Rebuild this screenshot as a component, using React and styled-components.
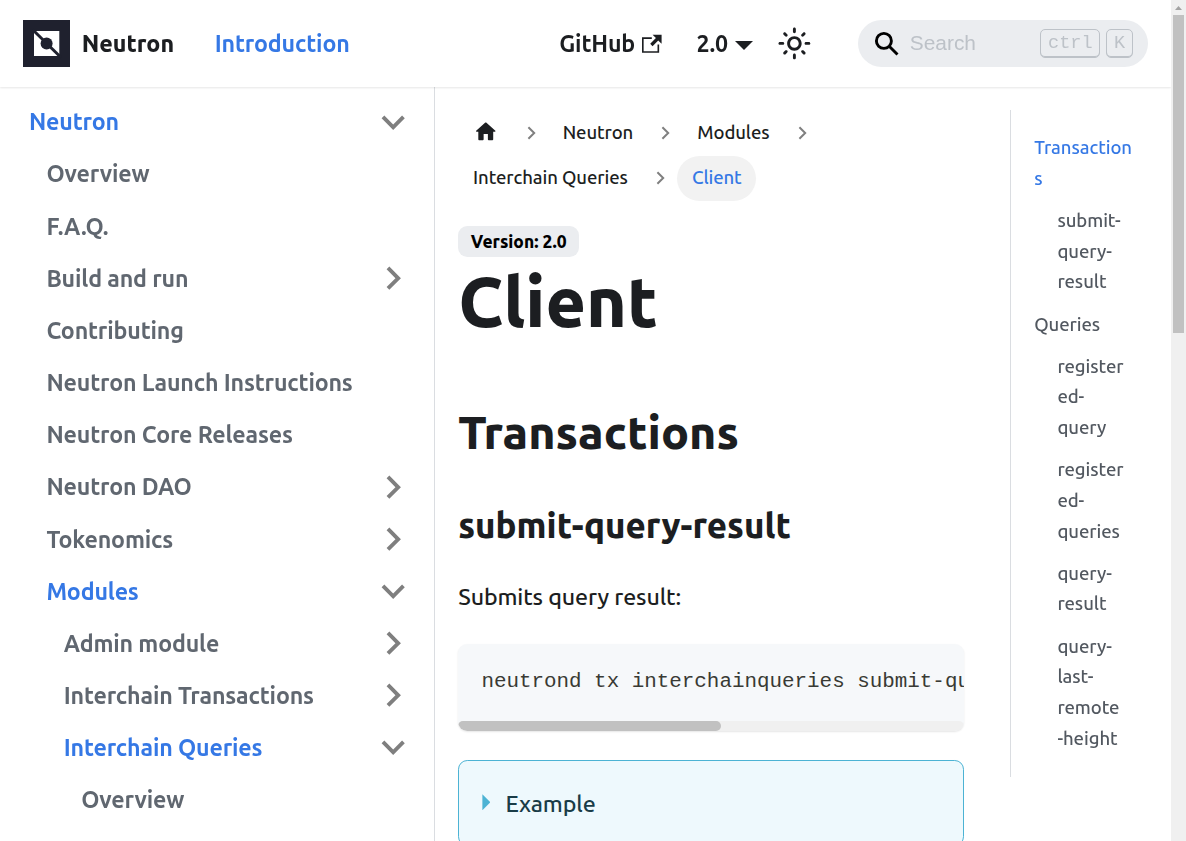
import React from "react";
import styled, { createGlobalStyle } from "styled-components";

const GlobalStyle = createGlobalStyle`
  *, *::before, *::after { box-sizing: border-box; }
  html { font-size: 23.2px; }
  body {
    margin: 0;
    overflow: hidden;
    background: #fff;
    color: #1c1e21;
    font-family: Ubuntu, "Noto Sans", sans-serif;
    font-weight: 500;
    line-height: 1.65;
    text-rendering: optimizeLegibility;
  }
  a { color: inherit; text-decoration: none; }
`;

const Window = styled.div`
  display: grid;
  grid-template-columns: 1fr 15px;
  height: 841px;
  overflow: hidden;
`;

const Page = styled.div`
  display: flex;
  flex-direction: column;
  min-width: 0;
  height: 841px;
  overflow: hidden;
`;

/* Navbar */

const Navbar = styled.nav`
  display: flex;
  flex: none;
  align-items: center;
  height: 3.75rem;
  padding: 0.5rem 1rem;
  background: #fff;
  box-shadow: 0 1px 2px 0 rgba(0, 0, 0, 0.1);
  font-weight: 600;
  letter-spacing: -0.14px;
  z-index: 1;
  will-change: transform;
`;

const Brand = styled.a`
  display: flex;
  align-items: center;
  gap: 0.5rem;
  margin-right: 1rem;
  font-weight: 800;
  letter-spacing: 0;
`;

const Logo = styled.svg`
  display: block;
  width: 47px;
  height: 47px;
`;

const NavLink = styled.a`
  display: flex;
  align-items: center;
  padding: 0.25rem 0.75rem;
  color: ${(p) => (p.$active ? "#3578e5" : "#1c1e21")};
`;

const NavText = styled.span`
  margin-top: -1px;
`;

const Spacer = styled.div`
  flex: 1;
`;

const ExternalIcon = styled.svg`
  width: 19.6px;
  height: 19.6px;
  margin-left: 0.3rem;
`;

const Caret = styled.span`
  margin-left: 0.3em;
  border: solid transparent;
  border-width: 0.4em 0.4em 0;
  border-top-color: currentColor;
  transform: translateY(2px);
`;

const ThemeToggle = styled.button`
  display: flex;
  align-items: center;
  justify-content: center;
  width: 2rem;
  height: 2rem;
  margin-left: 1px;
  padding: 0;
  border: 0;
  background: none;
  color: #1c1e21;

  svg {
    width: 34.8px;
    height: 34.8px;
  }
`;

const SearchBox = styled.div`
  display: flex;
  align-items: center;
  width: 290px;
  height: 47px;
  margin-left: 40.2px;
  padding: 0 15px 0 16px;
  border-radius: 24px;
  background: #ebedf0;
  color: #bdc2c8;
  font: 400 20.88px/1 "Liberation Sans", sans-serif;
  letter-spacing: 0;
`;

const SearchIcon = styled.svg`
  width: 26px;
  height: 26px;
  margin-right: 10px;
`;

const SearchHint = styled.span`
  flex: 1;
`;

const Key = styled.kbd`
  height: 29px;
  margin-left: 6px;
  padding: 0 6.7px;
  border: 1px solid #bdc2c8;
  border-radius: 5px;
  box-shadow: inset 0 -1px 0 #bdc2c8;
  font: 18.56px/27px "Liberation Mono", monospace;
`;

/* Body columns */

const Columns = styled.div`
  display: grid;
  flex: 1;
  grid-template-columns: 435px 552px 184px;
  min-height: 0;
`;

const Sidebar = styled.aside`
  padding: 11.57px 0.5rem;
  border-right: 1px solid #dadde1;
  overflow: hidden;
  will-change: transform;
`;

const MenuRow = styled.div`
  display: flex;
  align-items: center;
  justify-content: space-between;
  height: 2rem;
  margin-top: ${(p) => (p.$first ? 0 : "5.78px")};
  padding-left: ${(p) => 0.75 + p.$level * 0.75}rem;
  color: ${(p) => (p.$active ? "#3578e5" : "#606770")};
  font-weight: 600;
  letter-spacing: -0.16px;
  line-height: 1.25;
`;

const MenuChevron = styled.svg`
  width: 2rem;
  height: 2rem;
  margin-right: 5.6px;
  fill: rgba(0, 0, 0, 0.5);
  transform: rotate(${(p) => (p.$open ? 180 : 90)}deg);
`;

const Article = styled.main`
  min-width: 0;
  padding: 1rem 1rem 0;
`;

const Breadcrumbs = styled.ul`
  display: flex;
  flex-wrap: wrap;
  margin: 0 0 24.8px;
  padding: 0;
  list-style: none;
  font-size: 0.8rem;
  letter-spacing: -0.1px;
`;

const Crumb = styled.li`
  display: flex;
  align-items: center;
`;

const CrumbLink = styled.a`
  display: flex;
  align-items: center;
  height: 45.47px;
  padding: 0 0.8em;
  border-radius: 2rem;
  background: ${(p) => (p.$active ? "#f2f2f2" : "transparent")};
  color: ${(p) => (p.$active ? "#3578e5" : "#1c1e21")};
`;

const HomeIcon = styled.svg`
  width: 1.1rem;
  height: 1.1rem;
  margin-bottom: 2px;
`;

const CrumbChevron = styled.svg`
  width: 9px;
  height: 14px;
  margin: 0 12.3px 0 13.2px;
`;

const VersionBadge = styled.span`
  display: block;
  width: fit-content;
  height: 31px;
  padding: 0 12.6px;
  border-radius: 0.4rem;
  background: #ebedf0;
  color: #000;
  font-size: 17.4px;
  font-weight: 800;
  line-height: 31px;
`;

const Title = styled.h1`
  margin: 1px 0 29px;
  font-size: 3rem;
  font-weight: 800;
  line-height: 1.25;
`;

const Section = styled.h2`
  margin: 58px 0 29px;
  font-size: 2rem;
  font-weight: 800;
  line-height: 1.25;
`;

const SubSection = styled.h3`
  margin: 43px 0 29.6px;
  font-size: 1.5rem;
  font-weight: 800;
  line-height: 1.25;
`;

const Paragraph = styled.p`
  margin: 0 0 29px;
  letter-spacing: -0.13px;
`;

const CodeBlock = styled.pre`
  display: flex;
  flex-direction: column;
  justify-content: space-between;
  height: 87px;
  margin: 0;
  border-radius: 0.4rem;
  background: #f6f8fa;
  box-shadow: 0 1px 2px 0 rgba(0, 0, 0, 0.1);
  color: #393a34;
  font: 20.88px/30.3px "Liberation Mono", monospace;
  overflow: hidden;
`;

const CodeLine = styled.code`
  padding: 22.8px 0 0 1rem;
  font: inherit;
  white-space: pre;
`;

const CodeScroll = styled.div`
  flex: none;
  height: 10px;
  border-radius: 5px;
  background: #f0f0f0;

  &::before {
    content: "";
    display: block;
    width: 263px;
    height: 10px;
    border-radius: 5px;
    background: #c1c1c1;
  }
`;

const Details = styled.section`
  display: flex;
  align-items: center;
  height: 86px;
  margin-top: 29px;
  padding: 0 1rem;
  border: 1px solid #4cb3d4;
  border-radius: 0.4rem;
  background: #eef9fd;
  color: #193c47;
  letter-spacing: -0.1px;
`;

const Disclosure = styled.span`
  width: 8px;
  height: 16px;
  margin: -2px 15px 0 0;
  background: #4cb3d4;
  clip-path: polygon(0 0, 100% 50%, 0 100%);
`;

/* Table of contents */

const Toc = styled.ul`
  align-self: start;
  height: 667px;
  margin: 1rem 0 0 23px;
  padding: 23.32px 0 0 1rem;
  border-left: 1px solid #dadde1;
  list-style: none;
  font-size: 0.8rem;
  letter-spacing: -0.07px;
  color: #525860;
  will-change: transform;
`;

const TocItem = styled.li`
  margin-bottom: 0.5rem;
  padding-left: ${(p) => (p.$nested ? "1rem" : 0)};
  color: ${(p) => (p.$active ? "#3578e5" : "inherit")};
  white-space: pre-line;
`;

/* Page scrollbar */

const Scrollbar = styled.div`
  display: flex;
  flex-direction: column;
  align-items: center;
  background: #f0f0f0;
`;

const ScrollArrow = styled.svg`
  width: 15px;
  height: 15px;
  flex: none;
`;

const ScrollThumb = styled.div`
  width: 11px;
  height: 318px;
  background: #c1c1c1;
`;

const menu = [
  { label: "Neutron", level: 0, state: "open" },
  { label: "Overview", level: 1 },
  { label: "F.A.Q.", level: 1 },
  { label: "Build and run", level: 1, state: "closed" },
  { label: "Contributing", level: 1 },
  { label: "Neutron Launch Instructions", level: 1 },
  { label: "Neutron Core Releases", level: 1 },
  { label: "Neutron DAO", level: 1, state: "closed" },
  { label: "Tokenomics", level: 1, state: "closed" },
  { label: "Modules", level: 1, state: "open" },
  { label: "Admin module", level: 2, state: "closed" },
  { label: "Interchain Transactions", level: 2, state: "closed" },
  { label: "Interchain Queries", level: 2, state: "open" },
  { label: "Overview", level: 3 },
];

const toc = [
  { label: "Transaction\ns", active: true },
  { label: "submit-\nquery-\nresult", nested: true },
  { label: "Queries" },
  { label: "register\ned-\nquery", nested: true },
  { label: "register\ned-\nqueries", nested: true },
  { label: "query-\nresult", nested: true },
  { label: "query-\nlast-\nremote\n-height", nested: true },
];

const Separator = () => (
  <CrumbChevron viewBox="0 0 9 14" fill="none" stroke="#808080" strokeWidth="2">
    <path d="M1.4 1.2 7.2 7l-5.8 5.8" />
  </CrumbChevron>
);

export default function App() {
  return (
    <Window>
      <GlobalStyle />
      <Page>
        <Navbar>
          <Brand href="#">
            <Logo viewBox="0 0 47 47">
              <path fill="#1f212e" d="M0 0h47v47H0z" />
              <path fill="#fff" d="M11 11h25.3v25H11z" />
              <path stroke="#1f212e" strokeWidth="3" d="m9.5 9.5 28.5 28" />
              <circle cx="23.6" cy="23.4" r="6" fill="#1f212e" />
            </Logo>
            <NavText>Neutron</NavText>
          </Brand>
          <NavLink href="#" $active><NavText>Introduction</NavText></NavLink>
          <Spacer />
          <NavLink href="#">
            <NavText>GitHub</NavText>
            <ExternalIcon viewBox="0 0 24 24" fill="currentColor">
              <path d="M21 13v10h-21v-19h12v2h-10v15h17v-8h2zm3-12h-10.988l4.035 4-6.977 7.07 2.828 2.828 6.977-7.07 4.125 4.172v-11z" />
            </ExternalIcon>
          </NavLink>
          <NavLink href="#">
            <NavText>2.0</NavText>
            <Caret />
          </NavLink>
          <ThemeToggle>
            <svg viewBox="0 0 24 24" fill="currentColor">
              <path d="M12,9c1.65,0,3,1.35,3,3s-1.35,3-3,3s-3-1.35-3-3S10.35,9,12,9 M12,7c-2.76,0-5,2.24-5,5s2.24,5,5,5s5-2.24,5-5 S14.76,7,12,7L12,7z M2,13l2,0c0.55,0,1-0.45,1-1s-0.45-1-1-1l-2,0c-0.55,0-1,0.45-1,1S1.45,13,2,13z M20,13l2,0c0.55,0,1-0.45,1-1 s-0.45-1-1-1l-2,0c-0.55,0-1,0.45-1,1S19.45,13,20,13z M11,2v2c0,0.55,0.45,1,1,1s1-0.45,1-1V2c0-0.55-0.45-1-1-1S11,1.45,11,2z M11,20v2c0,0.55,0.45,1,1,1s1-0.45,1-1v-2c0-0.55-0.45-1-1-1C11.45,19,11,19.45,11,20z M5.99,4.58c-0.39-0.39-1.03-0.39-1.41,0 c-0.39,0.39-0.39,1.03,0,1.41l1.06,1.06c0.39,0.39,1.03,0.39,1.41,0s0.39-1.03,0-1.41L5.99,4.58z M18.36,16.95 c-0.39-0.39-1.03-0.39-1.41,0c-0.39,0.39-0.39,1.03,0,1.41l1.06,1.06c0.39,0.39,1.03,0.39,1.41,0c0.39-0.39,0.39-1.03,0-1.41 L18.36,16.95z M19.42,5.99c0.39-0.39,0.39-1.03,0-1.41c-0.39-0.39-1.03-0.39-1.41,0l-1.06,1.06c-0.39,0.39-0.39,1.03,0,1.41 s1.03,0.39,1.41,0L19.42,5.99z M7.05,18.36c0.39-0.39,0.39-1.03,0-1.41c-0.39-0.39-1.03-0.39-1.41,0l-1.06,1.06 c-0.39,0.39-0.39,1.03,0,1.41s1.03,0.39,1.41,0L7.05,18.36z" />
            </svg>
          </ThemeToggle>
          <SearchBox>
            <SearchIcon viewBox="0 0 26 26" fill="none" stroke="#000" strokeWidth="2.9">
              <circle cx="9.9" cy="9.9" r="7.5" />
              <path d="m15.2 15.2 8.3 8.3" />
            </SearchIcon>
            <SearchHint>Search</SearchHint>
            <Key>ctrl</Key>
            <Key>K</Key>
          </SearchBox>
        </Navbar>
        <Columns>
          <Sidebar>
            {menu.map((item, i) => (
              <MenuRow key={i} $first={i === 0} $level={item.level} $active={item.state === "open"}>
                {item.label}
                {item.state && (
                  <MenuChevron viewBox="0 0 24 24" $open={item.state === "open"}>
                    <path d="M7.41 15.41L12 10.83l4.59 4.58L18 14l-6-6-6 6z" />
                  </MenuChevron>
                )}
              </MenuRow>
            ))}
          </Sidebar>
          <Article>
            <Breadcrumbs>
              <Crumb>
                <CrumbLink href="#">
                  <HomeIcon viewBox="0 0 24 24" fill="currentColor">
                    <path d="M10 19v-5h4v5c0 .55.45 1 1 1h3c.55 0 1-.45 1-1v-7h1.7c.46 0 .68-.57.33-.87L12.67 3.6c-.38-.34-.96-.34-1.34 0l-8.36 7.53c-.34.3-.13.87.33.87H5v7c0 .55.45 1 1 1h3c.55 0 1-.45 1-1z" />
                  </HomeIcon>
                </CrumbLink>
                <Separator />
              </Crumb>
              {["Neutron", "Modules", "Interchain Queries"].map((label) => (
                <Crumb key={label}>
                  <CrumbLink href="#">{label}</CrumbLink>
                  <Separator />
                </Crumb>
              ))}
              <Crumb>
                <CrumbLink $active>Client</CrumbLink>
              </Crumb>
            </Breadcrumbs>
            <VersionBadge>Version: 2.0</VersionBadge>
            <Title>Client</Title>
            <Section>Transactions</Section>
            <SubSection>submit-query-result</SubSection>
            <Paragraph>Submits query result:</Paragraph>
            <CodeBlock>
              <CodeLine>neutrond tx interchainqueries submit-query-result</CodeLine>
              <CodeScroll />
            </CodeBlock>
            <Details>
              <Disclosure />
              Example
            </Details>
          </Article>
          <Toc>
            {toc.map((item, i) => (
              <TocItem key={i} $nested={item.nested} $active={item.active}>{item.label}</TocItem>
            ))}
          </Toc>
        </Columns>
      </Page>
      <Scrollbar>
        <ScrollArrow viewBox="0 0 15 15">
          <path d="M4 10h7L7.5 6z" fill="#a3a3a3" />
        </ScrollArrow>
        <ScrollThumb />
      </Scrollbar>
    </Window>
  );
}
